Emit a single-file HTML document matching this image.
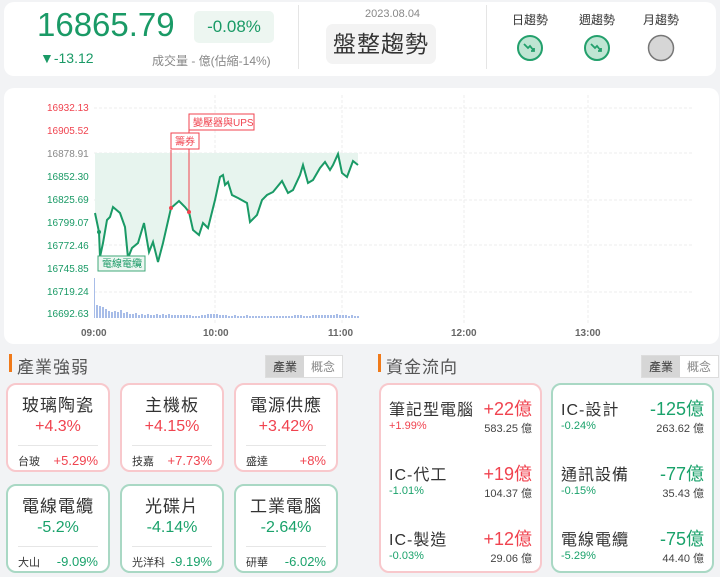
<!DOCTYPE html>
<html><head><meta charset="utf-8"><style>
*{margin:0;padding:0;box-sizing:border-box}
body{width:720px;height:577px;background:#f2f3f5;font-family:"Liberation Sans","Noto Sans CJK TC",sans-serif;position:relative;overflow:hidden;color:#444}
.abs{position:absolute}
.card{position:absolute;background:#fff;border-radius:10px}
.ic{position:absolute;border-radius:10px;background:#fff;border:2px solid #f8c8cc;text-align:center}
.ic.g{border-color:#a9d8c4}
.ic .n{font-size:17px;color:#333;margin-top:6px;letter-spacing:1px}
.ic .p{font-size:16px;margin-top:2px}
.ic hr{border:0;border-top:1px solid #e6e6e6;margin:9px 10px 0}
.ic .b{display:flex;justify-content:space-between;padding:7px 10px 0 10px;font-size:13px}
.ic .b span:first-child{font-size:11px;color:#333}
.r{color:#f0434f}.gr{color:#1aa26b}
.tabs{position:absolute;border:1px solid #ddd;display:flex;font-size:12px;background:#fff}
.tabs span{padding:2px 7px;color:#888}
.tabs span:first-child{background:#d6d6d6;color:#333}
.fc{position:absolute;border-radius:10px;background:#fff;border:2px solid #f8c8cc}
.fc.g{border-color:#a9d8c4}
.row{position:absolute;left:8px;right:8px;height:40px}
.row .a{position:absolute;left:0;top:1px;font-size:16px;color:#333;letter-spacing:1px}
.row .v{position:absolute;right:0;top:0;font-size:18px}
.row .c{position:absolute;left:0;top:25px;font-size:11px}
.row .m{position:absolute;right:0;top:25px;font-size:11px;color:#444}
</style></head><body>
<div class="card" style="left:4px;top:2px;width:712px;height:74px"></div>
<div class="abs" style="left:37px;top:6px;font-size:33px;color:#1a9a66">16865.79</div>
<div class="abs" style="left:194px;top:11px;width:80px;height:32px;background:#edf6f1;border-radius:5px;color:#1a9a66;font-size:17px;text-align:center;line-height:32px">-0.08%</div>
<div class="abs" style="left:40px;top:50px;font-size:14px;color:#1a9a66">▼-13.12</div>
<div class="abs" style="left:152px;top:52px;font-size:12px;color:#888">成交量 - 億(估縮-14%)</div>
<div class="abs" style="left:298px;top:5px;width:1px;height:64px;background:#e5e5e5"></div>
<div class="abs" style="left:365px;top:8px;font-size:11px;color:#888">2023.08.04</div>
<div class="abs" style="left:326px;top:24px;width:110px;height:40px;background:#f3f3f3;border-radius:7px;font-size:23px;color:#333;text-align:center;line-height:40px;letter-spacing:1px">盤整趨勢</div>
<div class="abs" style="left:486px;top:5px;width:1px;height:64px;background:#e5e5e5"></div>
<div class="abs" style="left:512px;top:11px;font-size:12px;color:#333">日趨勢</div>
<div class="abs" style="left:579px;top:11px;font-size:12px;color:#333">週趨勢</div>
<div class="abs" style="left:643px;top:11px;font-size:12px;color:#333">月趨勢</div>
<svg class="abs" style="left:516px;top:34px" width="30" height="30"><circle cx="14" cy="14" r="12" fill="#bfe5d3" stroke="#23a06c" stroke-width="2"/><path d="M8 10l4 4 2-2 4 5m0-3v3h-3" fill="none" stroke="#23a06c" stroke-width="1.8"/></svg>
<svg class="abs" style="left:583px;top:34px" width="30" height="30"><circle cx="14" cy="14" r="12" fill="#bfe5d3" stroke="#23a06c" stroke-width="2"/><path d="M8 10l4 4 2-2 4 5m0-3v3h-3" fill="none" stroke="#23a06c" stroke-width="1.8"/></svg>
<svg class="abs" style="left:647px;top:34px" width="30" height="30"><circle cx="14" cy="14" r="12.5" fill="#d6d6d6" stroke="#777" stroke-width="1.5"/></svg>

<div class="card" style="left:4px;top:88px;width:715px;height:256px"></div>
<svg class="abs" style="left:0;top:0" width="720" height="345">
<g stroke="#eee" stroke-dasharray="3,2"><line x1="94" y1="108" x2="693" y2="108"/><line x1="94" y1="153" x2="693" y2="153"/><line x1="94" y1="200" x2="693" y2="200"/><line x1="94" y1="245" x2="693" y2="245"/><line x1="94" y1="292" x2="693" y2="292"/>
<line x1="215" y1="95" x2="215" y2="323"/><line x1="342" y1="95" x2="342" y2="323"/><line x1="464" y1="95" x2="464" y2="323"/><line x1="588" y1="95" x2="588" y2="323"/></g>
<g font-size="10" font-family="Liberation Sans">
<text x="47" y="111" fill="#f0434f">16932.13</text><text x="47" y="134" fill="#f0434f">16905.52</text><text x="47" y="157" fill="#888">16878.91</text>
<text x="47" y="180" fill="#1a9a66">16852.30</text><text x="47" y="203" fill="#1a9a66">16825.69</text><text x="47" y="226" fill="#1a9a66">16799.07</text><text x="47" y="249" fill="#1a9a66">16772.46</text><text x="47" y="272" fill="#1a9a66">16745.85</text><text x="47" y="295" fill="#1a9a66">16719.24</text><text x="47" y="317" fill="#1a9a66">16692.63</text>
<text x="81" y="336" fill="#666" font-weight="bold">09:00</text><text x="203" y="336" fill="#666" font-weight="bold">10:00</text><text x="328" y="336" fill="#666" font-weight="bold">11:00</text><text x="451" y="336" fill="#666" font-weight="bold">12:00</text><text x="575" y="336" fill="#666" font-weight="bold">13:00</text></g>
<path d="M95 153 L95 213 L99 232 L100 257 L103 243 L107 220 L110 217 L113 207 L120 213 L125 227 L128 258 L132 248 L138 243 L144 223 L149 252 L153 242 L158 262 L163 243 L171 208 L179 201 L185 207 L189 212 L193 230 L199 235 L203 223 L208 228 L215 200 L220 177 L223 175 L225 185 L228 182 L232 195 L238 198 L247 203 L250 222 L257 215 L262 200 L267 195 L273 192 L282 181 L288 193 L293 190 L300 175 L303 165 L308 183 L313 180 L320 168 L325 162 L330 170 L333 165 L338 154 L342 173 L347 177 L353 161 L358 165 L358 153 Z" fill="#e7f4ee"/>
<path d="M95 213 L99 232 L100 257 L103 243 L107 220 L110 217 L113 207 L120 213 L125 227 L128 258 L132 248 L138 243 L144 223 L149 252 L153 242 L158 262 L163 243 L171 208 L179 201 L185 207 L189 212 L193 230 L199 235 L203 223 L208 228 L215 200 L220 177 L223 175 L225 185 L228 182 L232 195 L238 198 L247 203 L250 222 L257 215 L262 200 L267 195 L273 192 L282 181 L288 193 L293 190 L300 175 L303 165 L308 183 L313 180 L320 168 L325 162 L330 170 L333 165 L338 154 L342 173 L347 177 L353 161 L358 165" fill="none" stroke="#1a9a66" stroke-width="2"/>
<g fill="#a8bde8"><rect x="94" y="278" width="1" height="40"/>
<path d="M96 305h2v13h-2zM99 306h2v12h-2zM102 307h2v11h-2zM105 309h2v9h-2zM108 311h2v7h-2zM111 312h2v6h-2zM114 311h2v7h-2zM117 312h2v6h-2zM120 310h2v8h-2zM123 313h2v5h-2zM126 312h2v6h-2zM129 314h2v4h-2zM132 314h2v4h-2zM135 313h2v5h-2zM138 315h2v3h-2zM141 314h2v4h-2zM144 315h2v3h-2zM147 314h2v4h-2zM150 315h2v3h-2zM153 315h2v3h-2zM156 314h2v4h-2zM159 315h2v3h-2zM162 314h2v4h-2zM165 315h2v3h-2zM168 314h2v4h-2zM171 315h2v3h-2zM174 315h2v3h-2zM177 315h2v3h-2zM180 315h2v3h-2zM183 315h2v3h-2zM186 315h2v3h-2zM189 315h2v3h-2zM192 316h2v2h-2zM195 316h2v2h-2zM198 316h2v2h-2zM201 315h2v3h-2zM204 315h2v3h-2zM207 314h2v4h-2zM210 314h2v4h-2zM213 314h2v4h-2zM216 314h2v4h-2zM219 315h2v3h-2zM222 315h2v3h-2zM225 315h2v3h-2zM228 316h2v2h-2zM231 316h2v2h-2zM234 315h2v3h-2zM237 316h2v2h-2zM240 316h2v2h-2zM243 316h2v2h-2zM246 315h2v3h-2zM249 316h2v2h-2zM252 316h2v2h-2zM255 316h2v2h-2zM258 316h2v2h-2zM261 316h2v2h-2zM264 316h2v2h-2zM267 316h2v2h-2zM270 316h2v2h-2zM273 316h2v2h-2zM276 316h2v2h-2zM279 316h2v2h-2zM282 316h2v2h-2zM285 316h2v2h-2zM288 316h2v2h-2zM291 316h2v2h-2zM294 315h2v3h-2zM297 315h2v3h-2zM300 315h2v3h-2zM303 316h2v2h-2zM306 316h2v2h-2zM309 316h2v2h-2zM312 315h2v3h-2zM315 315h2v3h-2zM318 315h2v3h-2zM321 315h2v3h-2zM324 315h2v3h-2zM327 315h2v3h-2zM330 315h2v3h-2zM333 315h2v3h-2zM336 314h2v4h-2zM339 315h2v3h-2zM342 315h2v3h-2zM345 315h2v3h-2zM348 316h2v2h-2zM351 315h2v3h-2zM354 316h2v2h-2zM357 316h2v2h-2z"/></g>
<g stroke="#f0434f" fill="none"><line x1="171" y1="150" x2="171" y2="208"/><line x1="189" y1="130" x2="189" y2="212"/>
<rect x="171" y="133" width="28" height="16" fill="#fff"/><rect x="189" y="114" width="65" height="16" fill="#fff"/></g>
<circle cx="171" cy="208" r="2" fill="#f0434f"/><circle cx="189" cy="212" r="2" fill="#f0434f"/>
<text x="175" y="145" font-size="10" fill="#f0434f">籌券</text><text x="193" y="126" font-size="10" fill="#f0434f">變壓器與UPS</text>
<rect x="98" y="256" width="47" height="15" fill="#eef7f2" stroke="#40a87a"/><circle cx="99" cy="232" r="2" fill="#1a9a66"/>
<text x="102" y="267" font-size="10" fill="#1a9a66">電線電纜</text>
</svg>

<div class="abs" style="left:9px;top:354px;width:3px;height:18px;background:#f07a1a"></div>
<div class="abs" style="left:17px;top:353px;font-size:17px;color:#555;letter-spacing:1px">產業強弱</div>
<div class="tabs" style="left:265px;top:355px"><span>產業</span><span>概念</span></div>
<div class="ic" style="left:6px;top:383px;width:104px;height:89px"><div class="n">玻璃陶瓷</div><div class="p r">+4.3%</div><hr><div class="b"><span>台玻</span><span class="r">+5.29%</span></div></div>
<div class="ic" style="left:120px;top:383px;width:104px;height:89px"><div class="n">主機板</div><div class="p r">+4.15%</div><hr><div class="b"><span>技嘉</span><span class="r">+7.73%</span></div></div>
<div class="ic" style="left:234px;top:383px;width:104px;height:89px"><div class="n">電源供應</div><div class="p r">+3.42%</div><hr><div class="b"><span>盛達</span><span class="r">+8%</span></div></div>
<div class="ic g" style="left:6px;top:484px;width:104px;height:89px"><div class="n">電線電纜</div><div class="p gr">-5.2%</div><hr><div class="b"><span>大山</span><span class="gr">-9.09%</span></div></div>
<div class="ic g" style="left:120px;top:484px;width:104px;height:89px"><div class="n">光碟片</div><div class="p gr">-4.14%</div><hr><div class="b"><span>光洋科</span><span class="gr">-9.19%</span></div></div>
<div class="ic g" style="left:234px;top:484px;width:104px;height:89px"><div class="n">工業電腦</div><div class="p gr">-2.64%</div><hr><div class="b"><span>研華</span><span class="gr">-6.02%</span></div></div>

<div class="abs" style="left:378px;top:354px;width:3px;height:18px;background:#f07a1a"></div>
<div class="abs" style="left:386px;top:353px;font-size:17px;color:#555;letter-spacing:1px">資金流向</div>
<div class="tabs" style="left:641px;top:355px"><span>產業</span><span>概念</span></div>
<div class="fc" style="left:379px;top:383px;width:163px;height:190px">
<div class="row" style="top:10px"><span class="a">筆記型電腦</span><span class="v r">+22億</span><span class="c r">+1.99%</span><span class="m">583.25 億</span></div>
<div class="row" style="top:75px"><span class="a">IC-代工</span><span class="v r">+19億</span><span class="c gr">-1.01%</span><span class="m">104.37 億</span></div>
<div class="row" style="top:140px"><span class="a">IC-製造</span><span class="v r">+12億</span><span class="c gr">-0.03%</span><span class="m">29.06 億</span></div></div>
<div class="fc g" style="left:551px;top:383px;width:163px;height:190px">
<div class="row" style="top:10px"><span class="a">IC-設計</span><span class="v gr">-125億</span><span class="c gr">-0.24%</span><span class="m">263.62 億</span></div>
<div class="row" style="top:75px"><span class="a">通訊設備</span><span class="v gr">-77億</span><span class="c gr">-0.15%</span><span class="m">35.43 億</span></div>
<div class="row" style="top:140px"><span class="a">電線電纜</span><span class="v gr">-75億</span><span class="c gr">-5.29%</span><span class="m">44.40 億</span></div></div>
</body></html>
